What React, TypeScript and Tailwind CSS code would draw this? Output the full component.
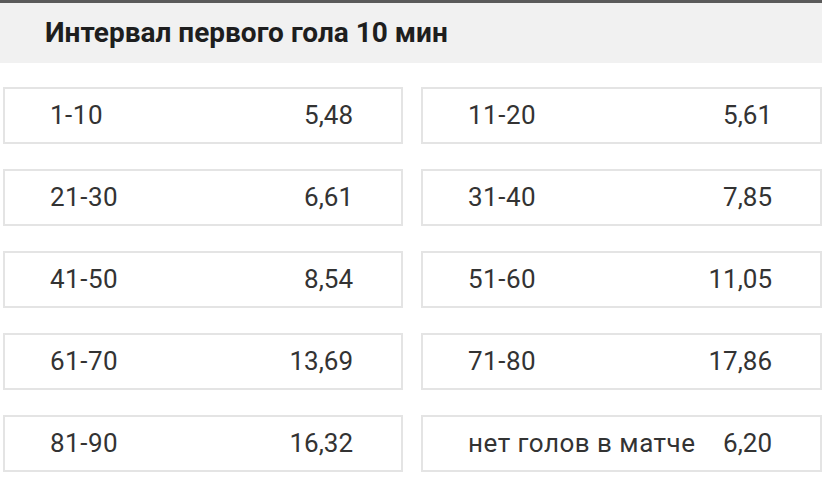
const rows: [string, string][] = [
  ['1-10', '5,48'],
  ['11-20', '5,61'],
  ['21-30', '6,61'],
  ['31-40', '7,85'],
  ['41-50', '8,54'],
  ['51-60', '11,05'],
  ['61-70', '13,69'],
  ['71-80', '17,86'],
  ['81-90', '16,32'],
  ['нет голов в матче', '6,20'],
];

export default function App() {
  return (
    <div className="w-[834px] h-[480px] bg-white font-[Roboto,sans-serif] text-[#333]">
      <div className="w-[822px] h-[63px] border-t-[3px] border-[#5a5a5a] bg-[#f1f1f1] flex items-center pl-[45px]">
        <h2 className="text-[28px] font-bold text-[#1e1e1e]">Интервал первого гола 10 мин</h2>
      </div>
      <div className="grid grid-cols-[400px_401px] gap-x-[18px] gap-y-[25px] ml-[3px] mt-[24px]">
        {rows.map(([label, odds]) => (
          <div
            key={label}
            className="h-[57px] border-2 border-[#e4e4e4] flex items-center justify-between pl-[45px] pr-[48px] text-[26px]"
          >
            <span className="tracking-[0.5px]">{label}</span>
            <span>{odds}</span>
          </div>
        ))}
      </div>
    </div>
  );
}
